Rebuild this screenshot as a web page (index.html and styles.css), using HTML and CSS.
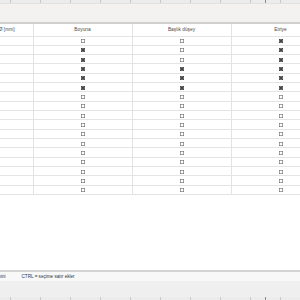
FILE: index.html
```html
<!DOCTYPE html>
<html lang="tr">
<head>
    <meta charset="UTF-8">
    <title>Donatı tablosu</title>
    <link rel="stylesheet" href="styles.css">
</head>
<body>
    <!-- Üst şerit -->
    <div class="ruler"><span class="mark"></span></div>
    <div class="panel"></div>

    <!-- Tablo -->
    <div class="grid">
        <table>
            <thead>
                <tr>
                    <th class="first">Uzunluk oranı Ø [mm]</th>
                    <th>Boyuna</th>
                    <th>Başlık düşey</th>
                    <th>Etriye</th>
                </tr>
            </thead>
            <tbody id="rows"></tbody>
        </table>
    </div>

    <div class="spacer"></div>

    <!-- Durum çubuğu -->
    <div class="status">
        <span class="hint first-hint">SHIFT = aralık seçimini</span>
        <span class="hint">CTRL = seçime satır ekler</span>
    </div>
    <div class="bottom"></div>
    <div class="ruler"><span class="mark"></span></div>

    <script>
        // Boyuna, Başlık düşey, Etriye
        var data = [
            [0, 0, 1], [1, 0, 1], [1, 0, 1], [1, 1, 1], [1, 1, 1], [1, 1, 1],
            [0, 0, 0], [0, 0, 0], [0, 0, 0], [0, 0, 0], [0, 0, 0], [0, 0, 0],
            [0, 0, 0], [0, 0, 0], [0, 0, 0], [0, 0, 0], [0, 0, 0]
        ];
        var box = '<svg class="cb" viewBox="0 0 10 10"><rect x="0.75" y="0.75" width="8.5" height="8.5" fill="#fff" stroke="#6a6a6a" stroke-width="1.5"/></svg>';
        var boxOn = '<svg class="cb" viewBox="0 0 10 10"><rect x="0.75" y="0.75" width="8.5" height="8.5" fill="#bbb" stroke="#2a2a2a" stroke-width="1.5"/><path d="M2.6 2.6 L7.4 7.4 M7.4 2.6 L2.6 7.4" stroke="#111" stroke-width="1.8"/></svg>';
        var html = '';
        data.forEach(function(row) {
            html += '<tr><td class="first"></td>';
            row.forEach(function(v) {
                html += '<td>' + (v ? boxOn : box) + '</td>';
            });
            html += '</tr>';
        });
        document.getElementById('rows').innerHTML = html;
    </script>
</body>
</html>
```

FILE: styles.css
```css
html, body {
    height: 100%;
}
body {
    font-family: "Liberation Sans", Arial, sans-serif;
    background-color: #fff;
    color: #333;
    margin: 0;
    overflow: hidden;
    display: flex;
    flex-direction: column;
}
.ruler {
    height: 3px;
    flex: none;
    background-color: #ececec;
    background-image: linear-gradient(to right, #c9c9c9 1px, transparent 1px);
    background-size: 30px 100%;
    background-position: 10px 0;
    display: flex;
}
.mark {
    width: 1px;
    margin-left: 265px;
    background-color: #8c8c8c;
}
.panel {
    height: 19px;
    flex: none;
    background-color: #f4f2f0;
    border-top: 1px solid #e2e2e2;
    box-sizing: border-box;
}
.grid {
    flex: none;
    border-top: 2px solid #cfcfcf;
    overflow: hidden;
}
table {
    border-collapse: collapse;
    table-layout: fixed;
    width: 396px;
    margin-left: -66px;
}
th, td {
    width: 99px;
    padding: 0;
    text-align: center;
    border-right: 1px solid #e2e2e2;
    border-bottom: 1px solid #e4e4e4;
    box-sizing: border-box;
}
th {
    height: 12px;
    font-size: 4.8px;
    font-weight: normal;
    color: #4a4a4a;
    vertical-align: middle;
}
th.first {
    text-align: right;
    padding-right: 18px;
}
td {
    height: 9.33px;
    line-height: 0;
    vertical-align: middle;
}
.cb {
    width: 4px;
    height: 4px;
}
.spacer {
    flex: 1;
}
.status {
    flex: none;
    height: 11px;
    border-top: 2px solid #d4d4d4;
    box-sizing: border-box;
    background-color: #f8f8f8;
    font-size: 4.6px;
    color: #333;
    display: flex;
    align-items: center;
    gap: 16px;
    overflow: hidden;
}
.first-hint {
    margin-left: -42px;
}
.bottom {
    flex: none;
    height: 16px;
    background-color: #efefef;
}
```
